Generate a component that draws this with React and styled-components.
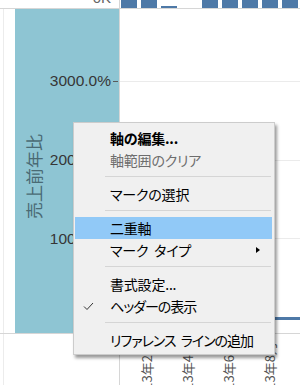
import React from "react";
import styled, { createGlobalStyle } from "styled-components";

const JP = `"Noto Sans CJK JP", "Noto Sans", sans-serif`;
const LINE = "#d6d6d6";
const BLUE = "#4e79a7";

const Global = createGlobalStyle`
  html, body { margin: 0; padding: 0; background: #fff; }
  body { width: 300px; height: 385px; overflow: hidden; font-family: "Liberation Sans", ${JP}; }
  * { box-sizing: border-box; }
`;

const Frame = styled.div`
  position: relative;
  width: 300px;
  height: 385px;
  overflow: hidden;
  display: grid;
  grid-template-columns: 120px 180px;
  grid-template-rows: 9px 325px 51px;
`;

const AxisCell = styled.div`
  border-right: 1px solid ${LINE};
  border-bottom: ${(p) => (p.$last ? "none" : `1px solid ${LINE}`)};
  padding-left: ${(p) => (p.$pad ? "15px" : "0")};
  overflow: hidden;
  background: ${(p) =>
    p.$rule
      ? "linear-gradient(to right, transparent 3px, #ececec 3px, #ececec 4px, transparent 4px)"
      : "transparent"};
`;

const PaneCell = styled.div`
  border-bottom: ${(p) => (p.$last ? "none" : `1px solid ${LINE}`)};
  overflow: hidden;
  position: relative;
`;

const TopAxis = styled(AxisCell)`
  display: flex;
  justify-content: flex-end;
  align-items: flex-end;
  padding-right: 8px;
`;

const TopLabel = styled.span`
  font-family: "Liberation Sans", sans-serif;
  font-size: 15px;
  line-height: 15px;
  color: #666;
  margin-bottom: 3px;
`;

const Teal = styled.div`
  height: 100%;
  background: #8ec5d3;
  display: flex;
`;

const TitleCol = styled.div`
  width: 38px;
  flex: none;
  display: flex;
  align-items: center;
  justify-content: center;
  padding-top: 11px;
`;

const AxisTitle = styled.div`
  writing-mode: vertical-rl;
  text-orientation: sideways;
  transform: rotate(180deg);
  font-family: ${JP};
  font-size: 17px;
  line-height: 18px;
  color: #4a6a74;
  white-space: nowrap;
`;

const TickCol = styled.div`
  flex: 1;
  position: relative;
`;

const Tick = styled.div`
  position: absolute;
  right: 1px;
  transform: translateY(-50%);
  display: flex;
  align-items: center;
  gap: 2px;
`;

const TickLabel = styled.span`
  font-family: "Liberation Sans", sans-serif;
  font-size: 15.5px;
  line-height: 16px;
  color: #363636;
`;

const TickMark = styled.span`
  width: 5px;
  height: 1px;
  background: #5a5a5a;
`;

const ChartSvg = styled.svg`
  display: block;
`;

const XHeader = styled.div`
  display: flex;
  align-items: flex-start;
  gap: 27px;
  padding: 8px 0 0 20px;
  overflow: hidden;
  height: 100%;
`;

const XLabel = styled.div`
  writing-mode: vertical-rl;
  text-orientation: sideways;
  transform: rotate(180deg);
  font-family: ${JP};
  font-size: 13px;
  line-height: 14px;
  color: #555;
  white-space: nowrap;
  flex: none;
`;

const Menu = styled.div`
  position: absolute;
  left: 73px;
  top: 122px;
  width: 202px;
  padding: 4px 2px 3px 1px;
  background: #f0f0f0;
  border: 1px solid #cccccc;
  box-shadow: 2px 3px 3px rgba(0, 0, 0, 0.4);
  font-family: ${JP};
  font-feature-settings: "palt";
  font-size: 14px;
`;

const Item = styled.div`
  height: 22px;
  display: flex;
  align-items: center;
  background: ${(p) => (p.$active ? "#91c9f7" : "transparent")};
  color: ${(p) => (p.$disabled ? "#6d6d6d" : "#000")};
  font-weight: ${(p) => (p.$bold ? 700 : 400)};
`;

const Gutter = styled.span`
  width: 26px;
  flex: none;
  display: flex;
  align-items: center;
  justify-content: center;
`;

const ItemText = styled.span`
  padding-left: 9px;
  line-height: 22px;
  white-space: nowrap;
  letter-spacing: ${(p) => p.$track || "-0.2px"};
  word-spacing: 3px;
`;

const SubArrow = styled.span`
  margin-left: auto;
  margin-right: 12px;
  width: 0;
  height: 0;
  border-left: 4px solid #000;
  border-top: 3.5px solid transparent;
  border-bottom: 3.5px solid transparent;
`;

const Separator = styled.div`
  height: 1px;
  margin: 5px 1px 6px 30px;
  background: #d5d5d5;
`;

const Check = () => (
  <svg width="11" height="9" viewBox="0 0 11 9">
    <polyline points="1,4.5 4,7.5 10,1" fill="none" stroke="#333" strokeWidth="1" />
  </svg>
);

const bars = [
  { x: 1, h: 8 },
  { x: 21, h: 8 },
  { x: 41, h: 2 },
  { x: 82, h: 8 },
  { x: 102, h: 8 },
  { x: 122, h: 8 },
  { x: 142, h: 8 },
  { x: 162, h: 8 },
];

const ticks = [
  { y: 72, label: "3000.0%" },
  { y: 151, label: "2000.0%" },
  { y: 230, label: "1000.0%" },
];

const grid = [72, 151, 229];

const xLabels = ["2013年2月", "2013年4月", "2013年6月", "2013年8月"];

const menu = [
  { t: "軸の編集...", bold: true },
  { t: "軸範囲のクリア", disabled: true },
  { sep: true },
  { t: "マークの選択" },
  { sep: true },
  { t: "二重軸", active: true },
  { t: "マーク タイプ", sub: true },
  { sep: true },
  { t: "書式設定..." },
  { t: "ヘッダーの表示", checked: true, track: "-1px" },
  { sep: true },
  { t: "リファレンス ラインの追加", track: "-1px" },
];

export default function App() {
  return (
    <>
      <Global />
      <Frame>
        <TopAxis>
          <TopLabel>0K</TopLabel>
        </TopAxis>
        <PaneCell>
          <ChartSvg width="180" height="8">
            {bars.map((b, i) => (
              <rect key={i} x={b.x} y={8 - b.h} width="16" height={b.h} fill={BLUE} />
            ))}
          </ChartSvg>
        </PaneCell>

        <AxisCell $pad $rule>
          <Teal>
            <TitleCol>
              <AxisTitle>売上前年比</AxisTitle>
            </TitleCol>
            <TickCol>
              {ticks.map((t) => (
                <Tick key={t.label} style={{ top: t.y }}>
                  <TickLabel>{t.label}</TickLabel>
                  <TickMark />
                </Tick>
              ))}
            </TickCol>
          </Teal>
        </AxisCell>
        <PaneCell>
          <ChartSvg width="180" height="324">
            {grid.map((y) => (
              <rect key={y} x="0" y={y} width="180" height="1" fill="#ebebeb" />
            ))}
            <rect x="0" y="308" width="180" height="3" fill={BLUE} />
          </ChartSvg>
        </PaneCell>

        <AxisCell $last $rule />
        <PaneCell $last>
          <XHeader>
            {xLabels.map((l) => (
              <XLabel key={l}>{l}</XLabel>
            ))}
          </XHeader>
        </PaneCell>

        <Menu>
          {menu.map((m, i) =>
            m.sep ? (
              <Separator key={i} />
            ) : (
              <Item key={i} $active={m.active} $disabled={m.disabled} $bold={m.bold}>
                <Gutter>{m.checked ? <Check /> : null}</Gutter>
                <ItemText $track={m.track}>{m.t}</ItemText>
                {m.sub ? <SubArrow /> : null}
              </Item>
            )
          )}
        </Menu>
      </Frame>
    </>
  );
}
